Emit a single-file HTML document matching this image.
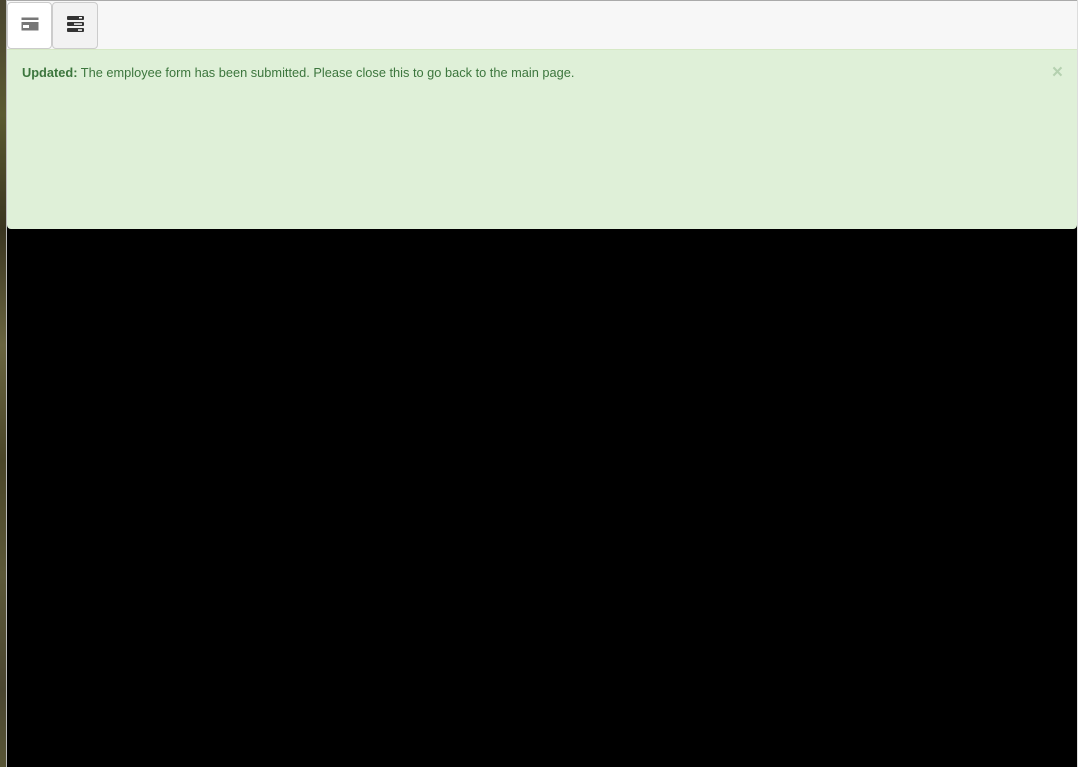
<!DOCTYPE html>
<html><head><meta charset="utf-8"><style>
html,body{margin:0;padding:0;width:1078px;height:767px;overflow:hidden;background:#000;font-family:"Liberation Sans",Arial,sans-serif}
.left{position:absolute;left:0;top:0;width:6px;height:767px;background:linear-gradient(180deg,#4a4530 0%,#5a5a30 15%,#3a3520 30%,#6a6540 45%,#4a4528 60%,#5c5838 75%,#4a4530 90%,#585535 100%)}
.line{position:absolute;left:6px;top:0;width:1px;height:767px;background:#bbb}
.header{position:absolute;left:7px;top:0;width:1070px;height:49px;background:#f7f7f7;border-top:1px solid #aaa;box-sizing:border-box}
.rline{position:absolute;left:1077px;top:0;width:1px;height:767px;background:#ddd}
.btn{position:absolute;top:1px;height:47px;border:1px solid #ccc;border-radius:4px;box-sizing:border-box}
.alert{position:absolute;left:7px;top:49px;width:1070px;height:180px;background:#dff0d8;border-top:1px solid #d6e9c6;box-sizing:border-box;border-radius:0 0 4px 4px}
.msg{position:absolute;left:15px;top:15px;font-size:12.8px;color:#3c763d;white-space:nowrap}
.x{position:absolute;right:14px;top:12px;font-size:19px;font-weight:bold;color:#3c763d;opacity:.25}
</style></head><body>
<div class="left"></div><div class="line"></div><div class="rline"></div>
<div class="header">
 <div class="btn" style="left:0;width:45px;background:#fff">
  <svg style="position:absolute;left:13px;top:14px" width="18" height="14" viewBox="0 0 18 14"><rect x="0.5" y="0.5" width="17" height="13" fill="#777"/><rect x="0.5" y="3" width="17" height="2" fill="#fff"/><rect x="2" y="8" width="6" height="3" fill="#fff"/></svg>
 </div>
 <div class="btn" style="left:45px;width:46px;background:#f2f2f2">
  <svg style="position:absolute;left:14px;top:13px" width="17" height="16" viewBox="0 0 17 16"><rect x="0" y="0" width="17" height="4" rx="1" fill="#333"/><rect x="0" y="6" width="17" height="4" rx="1" fill="#333"/><rect x="0" y="12" width="17" height="4" rx="1" fill="#333"/><rect x="12" y="1" width="3" height="1.5" fill="#fff"/><rect x="7" y="7.3" width="8" height="1.5" fill="#fff"/><rect x="11" y="13.3" width="4" height="1.5" fill="#fff"/></svg>
 </div>
</div>
<div class="alert">
 <div class="msg"><b>Updated:</b> The employee form has been submitted. Please close this to go back to the main page.</div>
 <div class="x">×</div>
</div>
</body></html>
